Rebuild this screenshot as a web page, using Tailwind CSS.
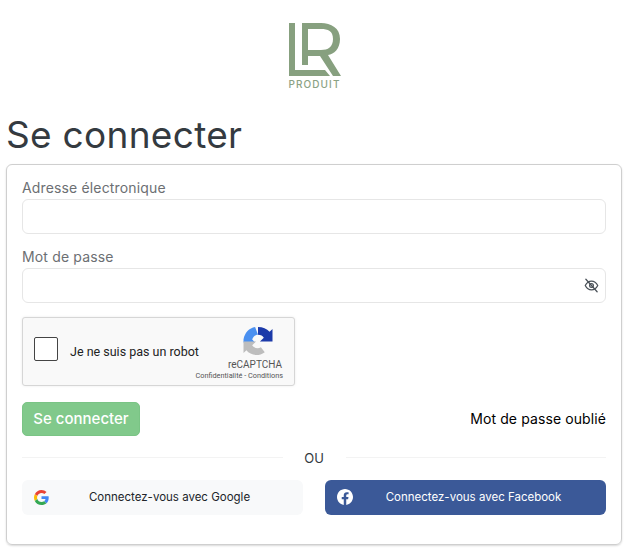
<!DOCTYPE html>
<html lang="fr">
<head>
  <meta charset="UTF-8" />
  <meta name="viewport" content="width=device-width, initial-scale=1.0"/>
  <title>Se connecter</title>
  <script src="https://cdn.jsdelivr.net/npm/@tailwindcss/browser@4"></script>
</head>
<body class="bg-white font-['Inter','Liberation_Sans',sans-serif] h-[551px] overflow-hidden">

  <!-- Logo -->
  <div class="flex flex-col items-center pt-[20px] h-[113px]">
    <svg width="60" height="58" viewBox="0 0 60 58" class="block">
      <g fill="#87a07f">
        <path d="M4 3h6v47h30l5 6H4z"/>
        <path d="M17 3h19c10 0 19 5 19 16 0 10-6 15-12 16l13 21h-8L35 36H23v9h-6zM23 9v21h13c7 0 12-3 12-11S43 9 36 9z" fill-rule="evenodd"/>
      </g>
    </svg>
    <span class="text-[10px] leading-[12px] tracking-[1.1px] text-[#8ba284] font-medium">PRODUIT</span>
  </div>

  <h1 class="px-[6px] text-[37px] leading-[44px] text-[#343a40] tracking-[0.3px]">Se connecter</h1>

  <!-- Card -->
  <div class="mx-[6px] mt-[7px] h-[381px] w-[616px] border border-[#cfcfcf] rounded-[6px] shadow-[0_1px_2px_rgba(0,0,0,0.15)] px-[15px] pt-[14px]">
    <label class="block mb-[2px] text-[14px] leading-[18px] tracking-[0.15px] text-[#6c6f73]">Adresse électronique</label>
    <input type="text" class="block w-full h-[35px] border border-[#e6e6e6] rounded-[6px]" />

    <label class="block mt-[13px] mb-[1px] text-[14px] leading-[20px] tracking-[0.15px] text-[#6c6f73]">Mot de passe</label>
    <div class="relative">
      <input type="password" class="block w-full h-[35px] border border-[#e6e6e6] rounded-[6px]" />
      <svg class="absolute right-[7px] top-[10px]" width="15" height="15" viewBox="0 0 24 24" fill="none" stroke="#495057" stroke-width="2" stroke-linecap="round" stroke-linejoin="round">
        <path d="M2 12s3.600-7 10-7 10 7 10 7-3.600 7-10 7-10-7-10-7z"/>
        <circle cx="12" cy="12" r="3"/>
        <path d="M3 2l18 20"/>
      </svg>
    </div>

    <!-- reCAPTCHA -->
    <div class="mt-[14px] relative w-[273px] h-[69px] bg-[#f9f9f9] border border-[#d6d6d6] rounded-[3px] shadow-[0_0_3px_rgba(0,0,0,0.08)] font-['Roboto',sans-serif]">
      <div class="absolute left-[11px] top-[19px] w-[24px] h-[24px] bg-white border border-[#444] rounded-[2px]"></div>
      <span class="absolute left-[47px] top-[25px] text-[12.5px] leading-[18px] text-[#222]">Je ne suis pas un robot</span>
      <svg class="absolute left-[220px] top-[9px]" width="30" height="29" viewBox="0 0 30 30">
        <path d="M0 13C1 6 6 1 12 0l3 8c-3 0-5 2-6 5l3 3H0z" fill="#4a90f0"/>
        <path d="M15 0c5 0 9 2 12 5l3-3v13H17l4-4c-1-2-3-3-6-3z" fill="#1c3aa9"/>
        <path d="M0 15h13l-4 4c2 3 6 4 9 2l4 5c-7 5-15 3-19-2l-3 3z" fill="#bdbdbd"/>
      </svg>
      <span class="absolute right-[12px] top-[41px] text-[10px] leading-[12px] text-[#555]">reCAPTCHA</span>
      <span class="absolute right-[11px] top-[53px] text-[7.3px] leading-[10px] text-[#555]">Confidentialité - Conditions</span>
    </div>

    <!-- Submit row -->
    <div class="mt-[16px] flex items-center justify-between">
      <button class="w-[118px] h-[34px] bg-[#81c98b] border border-[#7ac485] rounded-[5px] text-white text-[15px] font-medium">Se connecter</button>
      <a class="mb-[2px] text-[14px] tracking-[0.1px] text-black">Mot de passe oublié</a>
    </div>

    <!-- Divider -->
    <div class="mt-[11px] flex items-center h-[20px]">
      <div class="flex-1 border-t border-[#f3f3f3]"></div>
      <span class="mt-[2px] w-[63px] text-center text-[13px] leading-[16px] text-[#343a40]">OU</span>
      <div class="flex-1 border-t border-[#f3f3f3]"></div>
    </div>

    <!-- Social -->
    <div class="mt-[13px] grid grid-cols-2 gap-[22px] text-[11.5px]">
      <a class="relative flex items-center justify-center pl-[14px] h-[35px] bg-[#f8f9fa] rounded-[6px] text-[#212529]">
        <svg class="absolute left-[12px] top-[10px]" width="15" height="15" viewBox="0 0 48 48">
          <path fill="#EA4335" d="M24 9.500c3.500 0 6.700 1.200 9.200 3.600l6.900-6.900C35.900 2.400 30.500 0 24 0 14.600 0 6.500 5.400 2.600 13.200l8 6.200C12.500 13.700 17.800 9.500 24 9.500z"/>
          <path fill="#4285F4" d="M47 24.500c0-1.600-.1-3.100-.4-4.500H24v9h12.900c-.6 3-2.200 5.500-4.700 7.200l7.700 6C44.400 38 47 31.800 47 24.500z"/>
          <path fill="#FBBC05" d="M10.600 28.600c-.5-1.400-.8-3-.8-4.600s.3-3.200.8-4.600l-8-6.200C.9 16.500 0 20.100 0 24s.9 7.500 2.600 10.800z"/>
          <path fill="#34A853" d="M24 48c6.500 0 11.900-2.100 15.900-5.800l-7.700-6c-2.100 1.400-4.900 2.300-8.200 2.300-6.200 0-11.500-4.200-13.400-9.900l-8 6.200C6.500 42.600 14.600 48 24 48z"/>
        </svg>
        Connectez-vous avec Google
      </a>
      <a class="relative flex items-center justify-center pl-[16px] h-[35px] bg-[#3b5998] rounded-[6px] text-white">
        <svg class="absolute left-[12px] top-[9px]" width="16" height="16" viewBox="0 0 24 24" fill="#fff">
          <path d="M24 12.070C24 5.400 18.630 0 12 0S0 5.400 0 12.070c0 6.030 4.390 11.020 10.130 11.930v-8.440H7.080v-3.490h3.050V9.410c0-3.030 1.790-4.700 4.530-4.700 1.310 0 2.690.24 2.690.24v2.970h-1.510c-1.490 0-1.960.93-1.960 1.890v2.260h3.330l-.53 3.490h-2.800V24C19.610 23.090 24 18.100 24 12.070z"/>
        </svg>
        Connectez-vous avec Facebook
      </a>
    </div>
  </div>

</body>
</html>
